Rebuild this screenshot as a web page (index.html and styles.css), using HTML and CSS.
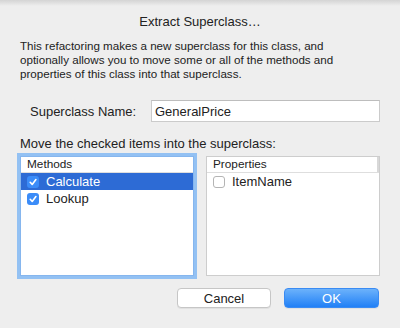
FILE: index.html
```html
<!DOCTYPE html>
<html lang="en">
<head>
	<meta charset="UTF-8">
	<title>Extract Superclass</title>
	<link rel="stylesheet" href="styles.css">
</head>
<body>
	<div class="dialog">
		<h1 class="title">Extract Superclass…</h1>
		<p class="intro">This refactoring makes a new superclass for this class, and<br>optionally allows you to move some or all of the methods and<br>properties of this class into that superclass.</p>
		<div class="name-row">
			<label class="name-label" for="name">Superclass Name:</label>
			<input class="name-field" id="name" type="text" value="GeneralPrice">
		</div>
		<p class="move-label">Move the checked items into the superclass:</p>
		<div class="lists">
			<div class="list focused">
				<div class="list-head">Methods</div>
				<div class="row selected">
					<span class="check on"><svg width="12" height="12" viewBox="0 0 12 12"><path d="M3.2 6.3 L5.2 8.4 L8.9 3.6" fill="none" stroke="#fff" stroke-width="1.6" stroke-linecap="round" stroke-linejoin="round"/></svg></span>
					Calculate
				</div>
				<div class="row">
					<span class="check on"><svg width="12" height="12" viewBox="0 0 12 12"><path d="M3.2 6.3 L5.2 8.4 L8.9 3.6" fill="none" stroke="#fff" stroke-width="1.6" stroke-linecap="round" stroke-linejoin="round"/></svg></span>
					Lookup
				</div>
			</div>
			<div class="list">
				<div class="list-head split">Properties</div>
				<div class="row">
					<span class="check"></span>
					ItemName
				</div>
			</div>
		</div>
		<div class="buttons">
			<button class="btn">Cancel</button>
			<button class="btn default">OK</button>
		</div>
	</div>
</body>
</html>
```
FILE: styles.css
```css
*{margin:0; padding:0; box-sizing:border-box;}
body{background:#eeeeee linear-gradient(#d4d4d4, #eeeeee 6px) no-repeat; font-family:"Liberation Sans", Arial, sans-serif; color:#222;}
.dialog{width:400px; height:328px;}
.title{padding-top:14px; font-size:13px; line-height:15px; font-weight:normal; text-align:center;}
.intro{margin-top:10px; padding-left:20px; font-size:11.6px; line-height:14px; white-space:nowrap;}
.name-row{display:flex; align-items:center; margin-top:19px; padding-left:30px;}
.name-label{width:121px; font-size:13px; line-height:15px;}
.name-field{width:229px; height:22px; border:1px solid #cbcbcb; border-top-color:#bdbdbd; background:#fff; padding:0 3px; font-family:"Liberation Sans", Arial, sans-serif; font-size:13px; color:#222; outline:none;}
.move-label{margin-top:14px; padding-left:20px; font-size:13px; line-height:15px;}
.lists{display:flex; gap:12px; margin-top:5px; padding-left:20px;}
.list{width:174px; height:120px; background:#fff; border:1px solid #cdcdcd;}
.list.focused{border-color:#86b6ee; box-shadow:0 0 0 3px #93c1f3;}
.list-head{height:16px; padding-left:6px; font-size:11.8px; line-height:15px; border-bottom:1px solid #dedede;}
.list-head.split{box-shadow:inset -2px 0 0 #d8d8d8;}
.row{display:flex; align-items:center; height:17px; padding-left:6px; font-size:13px; line-height:17px;}
.row.selected{background:#2d6bd5; color:#fff;}
.check{width:12px; height:12px; margin-right:7px; border-radius:3px; background:#fff; border:1px solid #b4b4b4; flex:none;}
.check.on{background:#3b8cf8; border:none;}
.check svg{display:block;}
.buttons{display:flex; justify-content:flex-end; gap:13px; margin-top:12px; padding-right:21px;}
.btn{width:94px; height:20px; border:1px solid #c6c6c6; border-radius:4px; background:#fff; font-family:"Liberation Sans", Arial, sans-serif; font-size:13px; color:#222; box-shadow:0 1px 0 rgba(0,0,0,0.05);}
.btn.default{width:95px; border-color:#3a8bf3; background:linear-gradient(#6cb2fb, #2180f6); color:#fff;}
```
